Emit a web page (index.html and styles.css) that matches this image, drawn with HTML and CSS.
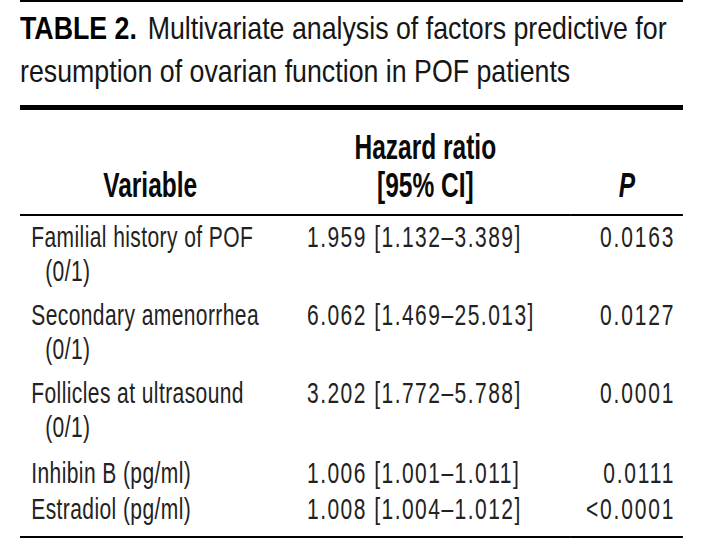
FILE: index.html
```
<!DOCTYPE html>
<html>
<head>
<meta charset="utf-8">
<link rel="stylesheet" href="styles.css">
</head>
<body>
<div class="sheet">
  <div class="caption-box">
    <div class="caption"><span class="label">TABLE 2.</span> Multivariate analysis of factors predictive for<br>resumption of ovarian function in POF patients</div>
  </div>
  <div class="table-box">
    <table class="data">
      <thead>
        <tr>
          <th class="c-var">Variable</th>
          <th class="c-hr">Hazard ratio<br>[95% CI]</th>
          <th class="c-p"><i>P</i></th>
        </tr>
      </thead>
      <tbody>
        <tr class="multi first">
          <td class="c-var"><div class="main">Familial history of POF</div><div class="sub">(0/1)</div></td>
          <td class="c-hr">1.959 [1.132–3.389]</td>
          <td class="c-p">0.0163</td>
        </tr>
        <tr class="multi">
          <td class="c-var"><div class="main">Secondary amenorrhea</div><div class="sub">(0/1)</div></td>
          <td class="c-hr">6.062 [1.469–25.013]</td>
          <td class="c-p">0.0127</td>
        </tr>
        <tr class="multi">
          <td class="c-var"><div class="main">Follicles at ultrasound</div><div class="sub">(0/1)</div></td>
          <td class="c-hr">3.202 [1.772–5.788]</td>
          <td class="c-p">0.0001</td>
        </tr>
        <tr class="single">
          <td class="c-var">Inhibin B (pg/ml)</td>
          <td class="c-hr">1.006 [1.001–1.011]</td>
          <td class="c-p">0.0111</td>
        </tr>
        <tr class="single last">
          <td class="c-var">Estradiol (pg/ml)</td>
          <td class="c-hr">1.008 [1.004–1.012]</td>
          <td class="c-p">&lt;0.0001</td>
        </tr>
      </tbody>
    </table>
  </div>
</div>
</body>
</html>
```

FILE: styles.css
```
html, body {
  margin: 0;
  padding: 0;
  background: #fff;
  overflow: hidden;
}
body {
  font-family: "Liberation Sans", Arial, sans-serif;
  color: #222;
}
.sheet {
  margin-left: 20px;
  width: 663px;
  border-top: 2px solid #000;
}
.caption-box {
  border-bottom: 5px solid #000;
  padding: 5px 0 12px 0;
}
.caption {
  width: 793px;
  transform: scaleX(0.836);
  transform-origin: left top;
  font-size: 32px;
  line-height: 43px;
  white-space: nowrap;
  color: #161616;
}
.label {
  font-weight: bold;
  color: #000;
  margin-right: 4px;
}
.table-box {
  width: 947px;
  transform: scaleX(0.7);
  transform-origin: left top;
}
.data {
  width: 947px;
  border-collapse: collapse;
  table-layout: fixed;
}
.data th,
.data td {
  box-sizing: border-box;
}
.data th {
  font-size: 35px;
  font-weight: bold;
  line-height: 38px;
  padding: 18px 0 10px 0;
  border-bottom: 2px solid #000;
  vertical-align: bottom;
  color: #0a0a0a;
  white-space: nowrap;
}
.data td {
  font-size: 30px;
  line-height: 32px;
  vertical-align: top;
  white-space: nowrap;
  padding: 0;
}
.main {
  height: 32px;
}
.sub {
  height: 32px;
  margin-top: 2px;
  padding-left: 20px;
}
.data tr.multi td {
  padding-top: 7px;
  padding-bottom: 5px;
}
.data tr.first td {
  padding-top: 5px;
}
.data tr.single td {
  padding-top: 9px;
  padding-bottom: 2px;
}
.data tr.last td {
  padding-top: 2px;
  padding-bottom: 11px;
  border-bottom: 2px solid #000;
}
.c-var {
  width: 410px;
  text-align: left;
}
.data td.c-var {
  padding-left: 16px;
  letter-spacing: 0.6px;
}
.data th.c-var {
  text-align: center;
  padding-right: 38px;
}
.c-hr {
  width: 377px;
  text-align: left;
}
.data td.c-hr {
  letter-spacing: 2.1px;
}
.data th.c-hr {
  text-align: center;
  padding-right: 39px;
}
.c-p {
  width: 160px;
  text-align: right;
}
.data td.c-p {
  padding-right: 11px;
  letter-spacing: 2.6px;
}
.data th.c-p {
  text-align: center;
}
```
